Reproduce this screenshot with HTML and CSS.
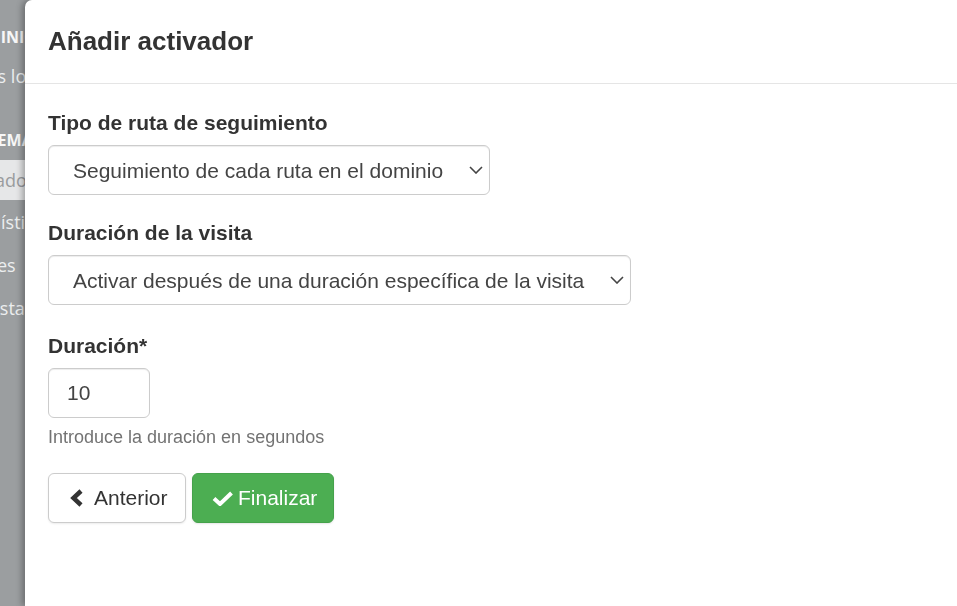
FILE: index.html
```html
<!DOCTYPE html>
<html lang="es">
<head>
    <meta charset="UTF-8">
    <meta name="viewport" content="width=device-width, initial-scale=1.0">
    <title>Añadir activador</title>
    <link rel="stylesheet" href="styles.css">
</head>
<body>
    <div class="app">
        <aside class="sidebar">
            <div class="side-head side-head-first">DOMINIOS</div>
            <a class="side-link side-link-top">Todos los dominios</a>
            <div class="side-head side-head-second">ESQUEMAS</div>
            <a class="side-link active">Activadores</a>
            <a class="side-link">Estadísticas</a>
            <a class="side-link">Ajustes</a>
            <a class="side-link side-link-last">Encuestas</a>
        </aside>
    </div>

    <div class="modal">
        <div class="modal-header">
            <h4 class="modal-title">Añadir activador</h4>
        </div>
        <div class="modal-body">
            <form>
                <div class="form-group">
                    <label for="route">Tipo de ruta de seguimiento</label>
                    <div class="select-wrap select-route">
                        <select id="route" class="form-control">
                            <option>Seguimiento de cada ruta en el dominio</option>
                        </select>
                        <svg class="caret" width="14" height="8" viewBox="0 0 14 8"><polyline points="1,1 7,7 13,1" fill="none" stroke="#444" stroke-width="1.6"/></svg>
                    </div>
                </div>

                <div class="form-group">
                    <label for="visit">Duración de la visita</label>
                    <div class="select-wrap select-visit">
                        <select id="visit" class="form-control">
                            <option>Activar después de una duración específica de la visita</option>
                        </select>
                        <svg class="caret" width="14" height="8" viewBox="0 0 14 8"><polyline points="1,1 7,7 13,1" fill="none" stroke="#444" stroke-width="1.6"/></svg>
                    </div>
                </div>

                <div class="form-group form-group-last">
                    <label for="duration">Duración*</label>
                    <input type="text" id="duration" class="form-control input-duration" value="10">
                    <span class="help-block">Introduce la duración en segundos</span>
                </div>

                <div class="actions">
                    <button type="button" class="btn btn-default">
                        <svg width="14" height="18" viewBox="0 0 14 18"><polyline points="12,2 4.5,9 12,16" fill="none" stroke="#333" stroke-width="4.5"/></svg>
                        Anterior
                    </button>
                    <button type="button" class="btn btn-success">
                        <svg width="21" height="15" viewBox="0 0 21 15"><polyline points="2,7.5 8,13 19.5,2" fill="none" stroke="#fff" stroke-width="4"/></svg>
                        Finalizar
                    </button>
                </div>
            </form>
        </div>
    </div>
</body>
</html>
```

FILE: styles.css
```css
body {
    margin: 0;
    padding: 0;
    font-family: "Liberation Sans", Arial, sans-serif;
    color: #333;
    background-color: #9b9ea0;
    height: 100vh;
    overflow: hidden;
}

/* Menú lateral, tapado por el modal */
.sidebar {
    width: 280px;
    margin-left: -60px;
    padding-top: 17px;
    display: flex;
    flex-direction: column;
    font-family: "Open Sans", sans-serif;
}

.side-head {
    height: 40px;
    padding-left: 15px;
    display: flex;
    align-items: center;
    font-size: 16px;
    font-weight: bold;
    color: #f7f7f7;
}

.side-head-first {
    padding-left: 21px;
}

.side-head-second {
    margin-top: 25px;
}

.side-link {
    height: 43px;
    padding-left: 15px;
    display: flex;
    align-items: center;
    font-size: 18px;
    color: #eceeef;
}

.side-link-top {
    height: 38px;
}

.side-link-last {
    padding-left: 9px;
}

.side-link.active {
    height: 40px;
    background-color: #e6e7e8;
    color: #9a9c9e;
}

/* Modal */
.modal {
    position: fixed;
    top: 0;
    left: 25px;
    right: 0;
    bottom: 0;
    background: #fff;
    border-top-left-radius: 7px;
    box-shadow: -3px 0 6px rgba(0, 0, 0, 0.3);
}

.modal-header {
    height: 83px;
    padding: 0 23px;
    display: flex;
    align-items: center;
    border-bottom: 1px solid #e5e5e5;
}

.modal-title {
    margin: 0;
    font-size: 26px;
    font-weight: bold;
    color: #333;
}

.modal-body {
    padding: 24px 23px;
}

.form-group {
    margin-bottom: 23px;
}

.form-group-last {
    margin-top: 26px;
}

label {
    display: block;
    font-size: 21px;
    line-height: 30px;
    font-weight: bold;
    margin-bottom: 7px;
}

.form-control {
    box-sizing: border-box;
    height: 50px;
    border: 1px solid #ccc;
    border-radius: 6px;
    background: #fff;
    font-family: inherit;
    font-size: 21px;
    color: #444;
    box-shadow: inset 0 1px 1px rgba(0, 0, 0, 0.075);
}

.select-wrap {
    position: relative;
}

.select-wrap select {
    width: 100%;
    padding: 0 40px 0 24px;
    appearance: none;
    -webkit-appearance: none;
}

.select-wrap .caret {
    position: absolute;
    right: 7px;
    top: 21px;
    pointer-events: none;
}

.select-route {
    width: 442px;
}

.select-visit {
    width: 583px;
}

.input-duration {
    width: 102px;
    padding: 0 18px;
}

.help-block {
    display: block;
    margin-top: 6px;
    font-size: 18px;
    line-height: 26px;
    color: #737373;
}

.actions {
    display: flex;
    gap: 6px;
}

.btn {
    box-sizing: border-box;
    height: 50px;
    display: inline-flex;
    align-items: center;
    border-radius: 6px;
    font-family: inherit;
    font-size: 21px;
    cursor: pointer;
}

.btn-default {
    width: 138px;
    padding: 0 0 0 20px;
    gap: 11px;
    background: #fff;
    color: #333;
    border: 1px solid #ccc;
    box-shadow: 0 1px 2px rgba(0, 0, 0, 0.08);
}

.btn-success {
    width: 142px;
    padding: 0 0 0 19px;
    gap: 5px;
    background: #4cae52;
    color: #fff;
    border: 1px solid #45a24b;
    box-shadow: 0 1px 2px rgba(0, 0, 0, 0.1);
}
```
